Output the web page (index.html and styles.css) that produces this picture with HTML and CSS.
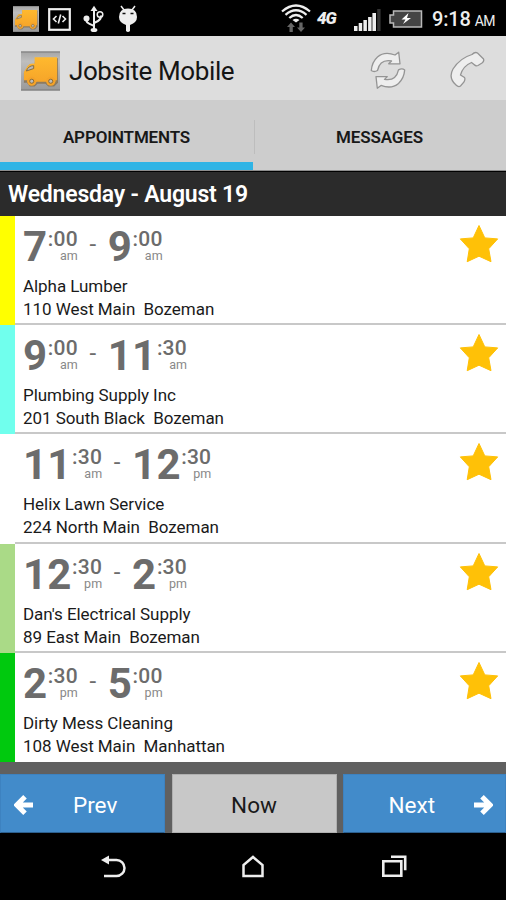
FILE: index.html
```
<!DOCTYPE html>
<html lang="en">
<head>
<meta charset="utf-8">
<title>Jobsite Mobile</title>
<link rel="stylesheet" href="styles.css">
</head>
<body>
<svg class="defs" width="0" height="0">
  <defs>
    <linearGradient id="plate" x1="0" y1="0" x2="0" y2="1"><stop offset="0" stop-color="#a5a5a5"/><stop offset=".25" stop-color="#bebebe"/><stop offset="1" stop-color="#999"/></linearGradient>
    <linearGradient id="van" x1="0" y1="0" x2="0" y2="1"><stop offset="0" stop-color="#ffb92e"/><stop offset="1" stop-color="#f5a329"/></linearGradient>
    <symbol id="truck" viewBox="0 0 40 40">
      <rect width="40" height="40" fill="url(#plate)"/>
      <path d="M0 .5h40M0 39.5h40" stroke="#777"/>
      <path d="M14.500 7h23.500v25l-4 4h-6l-3-3h-8l-3 3H9l-3-4H3V22l4-7q2-3 7-2z" fill="#816a43" opacity=".7"/>
      <path d="M14 6h23v23.500h-1.500a5 5 0 0 1-9.500 1.500H16a5 5 0 0 1-9.500-1.500H3V21l4-6.500q2-2.500 7-2z" fill="url(#van)"/>
      <circle cx="11" cy="30.500" r="4.700" fill="#f5a329"/><circle cx="30.500" cy="30.500" r="4.700" fill="#f5a329"/>
      <path d="M5.500 20q2-5.500 7.500-5.500v3z" fill="#b7b7b7" stroke="#846b40"/>
      <circle cx="11" cy="30.500" r="2.100" fill="#bbb" stroke="#8a6930"/>
      <circle cx="30.500" cy="30.500" r="2.100" fill="#bbb" stroke="#8a6930"/>
    </symbol>
    <symbol id="star" viewBox="0 0 40 40"><path d="M20 1.500 25.800 13.900 38.700 14.900 29.700 24.800 32 37.700 20 32.200 8.200 37.700 10.300 24.800 1.300 14.900 14.200 13.900Z" fill="#ffc107" stroke="#ffc107" stroke-width="1" stroke-linejoin="round"/></symbol>
    <symbol id="arrow" viewBox="0 0 20 20"><path d="M11 1.800 2.800 10l8.200 8.200M3.500 10H19" fill="none" stroke="#fff" stroke-width="5"/></symbol>
  </defs>
</svg>
<div class="screen">
  <header class="status">
    <div class="status-left">
      <svg width="26" height="26"><use href="#truck"/></svg>
      <svg width="23" height="23" viewBox="0 0 23 23" fill="none" stroke="#eee"><rect x="1.200" y="1.200" width="20.600" height="20.600" stroke-width="2.200"/><path d="M8.500 8 5.500 11l3 3M14.500 8l3 3-3 3M12.700 6.500l-2.400 9" stroke-width="1.600"/></svg>
      <svg class="usb" width="22" height="28" viewBox="0 0 22 28" fill="none" stroke="#eee" stroke-width="2"><path d="M11 5v19M3.500 14v1.500q0 2 3 3.300l4.500 2M11 18l4-2q3-1.500 3-5.500"/><path d="M7.500 6 11 .8 14.500 6z" fill="#eee" stroke="none"/><circle cx="3.500" cy="13.500" r="3" fill="#eee" stroke="none"/><circle cx="17" cy="9.500" r="2.800" stroke-width="1.500"/><ellipse cx="11" cy="25" rx="3.400" ry="2" fill="#eee" stroke="none"/></svg>
      <svg class="bot" width="20" height="28" viewBox="0 0 20 28"><path d="M3 1l3 4M17 1l-3 4" stroke="#eee" stroke-width="1.500"/><path d="M1 12Q1 3.500 10 3.500T19 12Q19 17.500 12 20v6q-2 2-4 0v-6Q1 17.500 1 12z" fill="#eee"/><path d="M4.500 8.500h3M12.500 8.500h3" stroke="#111" stroke-width="1.500"/></svg>
    </div>
    <div class="status-right">
      <svg class="wifi" width="30" height="29" viewBox="0 0 30 29" fill="none" stroke="#eee" stroke-width="2.300"><path d="M1 7.500Q15-4.500 29 7.500M4.500 10.800q10.500-9 21 0M8.300 14q6.700-6 13.400 0"/><path d="M11.500 16q3.500-2.500 7 0L15 18.500z" fill="#eee" stroke="none"/><path d="M10 18.500 14 23h-2.200v5H8.500v-5H6zM20 28l-4-4.500h2.300v-5h3.300v5H24z" fill="#666" stroke="none"/></svg>
      <span class="fourg">4G</span>
      <svg class="signal" width="27" height="22" viewBox="0 0 27 22"><path d="M0 17h3.500v5H0zM4.700 14h3.500v8H4.700zM9.400 11h3.500v11H9.400zM14.100 8h3.500v14h-3.500zM18.400 4H22v18h-3.600z" fill="#eee"/><path d="M23.200 0h3.400v22h-3.400z" fill="#333"/></svg>
      <svg class="battery" width="35" height="18" viewBox="0 0 35 18"><path d="M5.500 1h28v16h-28v-4H2V5h3.500z" fill="#444" stroke="#b8b8b8" stroke-width="1.500"/><path d="M20.500 3 13.500 9.500h4L15 14l8-6h-4z" fill="#fff"/></svg>
      <span class="clock">9:18</span><span class="ampm">AM</span>
    </div>
  </header>
  <div class="appbar">
    <svg class="logo" width="39" height="40" preserveAspectRatio="none"><use href="#truck"/></svg>
    <h1>Jobsite Mobile</h1>
    <svg class="sync" width="36" height="38" viewBox="0 0 36 38" fill="#eee" stroke="#949494" stroke-width="1.300" stroke-linejoin="round"><path id="half" d="M1.300 19.500Q2 11 7.500 6Q14.500 0 25 4L28.700 1.200 30 12.800H18.700L21.500 10Q10 8 7.500 19.500Q4 21.500 1.300 19.500z"/><use href="#half" transform="rotate(180 18 19.200)"/></svg>
    <svg class="phone" width="36" height="37" viewBox="0 0 36 37"><path d="M23 3.500Q26 .5 28.500 2L34.500 8Q35.500 10 33 12L29 14.500Q27 15.500 25 13.500L22.500 11.500Q14 15 11.500 24L15.500 26.500Q16.500 28 15 31L11.500 35Q9.500 36.500 7 34Q-1 27 4 18Q11 7 23 3.500z" fill="#eee" stroke="#949494" stroke-width="1.300"/></svg>
  </div>
  <nav class="tabs">
    <div class="tab active"><span class="t1">APPOINTMENTS</span></div>
    <div class="tab"><span class="t2">MESSAGES</span></div>
  </nav>
  <h2 class="date">Wednesday - August 19</h2>
  <main class="list">
    <article class="row yellow"><div class="info"><div class="times"><b>7</b><span class="sub"><span class="min">:00</span><span class="mer">am</span></span><i>-</i><b>9</b><span class="sub"><span class="min">:00</span><span class="mer">am</span></span></div><p>Alpha Lumber</p><p>110 West Main&nbsp; Bozeman</p></div><svg class="star" width="40" height="40"><use href="#star"/></svg></article>
    <article class="row cyan"><div class="info"><div class="times"><b>9</b><span class="sub"><span class="min">:00</span><span class="mer">am</span></span><i>-</i><b>11</b><span class="sub"><span class="min">:30</span><span class="mer">am</span></span></div><p>Plumbing Supply Inc</p><p>201 South Black&nbsp; Bozeman</p></div><svg class="star" width="40" height="40"><use href="#star"/></svg></article>
    <article class="row white"><div class="info"><div class="times"><b>11</b><span class="sub"><span class="min">:30</span><span class="mer">am</span></span><i>-</i><b>12</b><span class="sub"><span class="min">:30</span><span class="mer">pm</span></span></div><p>Helix Lawn Service</p><p>224 North Main&nbsp; Bozeman</p></div><svg class="star" width="40" height="40"><use href="#star"/></svg></article>
    <article class="row light"><div class="info"><div class="times"><b>12</b><span class="sub"><span class="min">:30</span><span class="mer">pm</span></span><i>-</i><b>2</b><span class="sub"><span class="min">:30</span><span class="mer">pm</span></span></div><p>Dan's Electrical Supply</p><p>89 East Main&nbsp; Bozeman</p></div><svg class="star" width="40" height="40"><use href="#star"/></svg></article>
    <article class="row green"><div class="info"><div class="times"><b>2</b><span class="sub"><span class="min">:30</span><span class="mer">pm</span></span><i>-</i><b>5</b><span class="sub"><span class="min">:00</span><span class="mer">pm</span></span></div><p>Dirty Mess Cleaning</p><p>108 West Main&nbsp; Manhattan</p></div><svg class="star" width="40" height="40"><use href="#star"/></svg></article>
  </main>
  <div class="pager">
    <div class="btn blue prev"><svg width="20" height="20"><use href="#arrow"/></svg><span>Prev</span></div>
    <div class="btn grey"><span>Now</span></div>
    <div class="btn blue next"><span>Next</span><svg class="flip" width="20" height="20"><use href="#arrow"/></svg></div>
  </div>
  <footer class="sysnav">
    <svg width="26" height="24" viewBox="0 0 26 24"><path d="M7 5h9.500a8 8 0 0 1 0 16H4" fill="none" stroke="#eee" stroke-width="2.500"/><path d="M1 5l8-4.500v9z" fill="#eee"/></svg>
    <svg width="26" height="24" viewBox="0 0 26 24"><path d="M3.500 21V10L13 2l9.500 8v11z" fill="none" stroke="#eee" stroke-width="2.500"/></svg>
    <svg width="26" height="24" viewBox="0 0 26 24" fill="none" stroke="#eee" stroke-width="2.600"><path d="M2.300 6.300h18v14.500h-18zM10 1.700h14.200v13.500"/></svg>
  </footer>
</div>
</body>
</html>
```
FILE: styles.css
```
* { box-sizing: border-box; margin: 0; padding: 0; }
body { width: 506px; height: 900px; overflow: hidden; background: #000; font-family: Roboto, "Liberation Sans", sans-serif; }
svg { display: block; flex: none; }
.defs { position: absolute; }
.screen { display: flex; flex-direction: column; width: 506px; height: 900px; }

.status { height: 36px; flex: none; display: flex; justify-content: space-between; background: #000; color: #eee; }
.status-left, .status-right { display: flex; align-items: center; }
.status-left { padding: 2px 0 0 13px; }
.status-left svg:nth-child(2) { margin-left: 9px; }
.usb { margin-left: 12px; }
.bot { margin-left: 13px; }
.status-right { padding-right: 11px; }
.wifi { margin-top: 1px; }
.fourg { width: 24px; margin-left: 6px; font-size: 17px; font-weight: 900; font-style: italic; letter-spacing: -1px; }
.signal { margin: 3px 0 0 13px; }
.battery { margin: 1px 0 0 7px; }
.clock { margin: 2px 0 0 9px; font-size: 20px; font-weight: 500; letter-spacing: -.2px; }
.ampm { margin: 6px 0 0 4px; font-size: 14px; letter-spacing: -.5px; }

.appbar { height: 64px; flex: none; display: flex; align-items: center; padding: 3px 21px 0; background: #ddd; }
.logo { margin-top: 2px; }
.appbar h1 { margin: 2px 0 0 9px; font-size: 26px; font-weight: 400; line-height: 32px; letter-spacing: -.4px; color: #151515; white-space: nowrap; }
.sync { margin: 1px 0 0 auto; }
.phone { margin: 0 0 0 43px; }

.tabs { height: 71px; flex: none; display: flex; background: #cdcdcd; border-bottom: 1px solid #8c8c8c; }
.tab { flex: 1; display: flex; align-items: center; justify-content: center; padding-top: 12px; font-size: 17px; font-weight: 600; letter-spacing: -.15px; color: #181818; border-bottom: 8px solid transparent; }
.tab.active { border-color: #30b4e5; }
.tab + .tab { background: linear-gradient(#bdbdbd, #bdbdbd) 1px 20px / 1px 34px no-repeat; }

.date { height: 45px; flex: none; padding-left: 8px; font-size: 23px; font-weight: 600; line-height: 45px; letter-spacing: -.2px; color: #fff; background: #2b2b2b; border-top: 1px solid #000; white-space: nowrap; }

.list { height: 546px; flex: none; display: grid; grid-template-rows: repeat(5, 1fr); background: #fff; }
.row { display: flex; justify-content: space-between; border-left: 15px solid; box-shadow: inset 0 -2px #c8c8c8; }
.row:last-child { box-shadow: none; }
.yellow { border-color: #ff0; }
.cyan { border-color: #70ffed; }
.white { border-color: #fff; }
.light { border-color: #aada87; }
.green { border-color: #00c90e; }
.info { padding: 9px 0 0 8px; }
.times { display: flex; height: 50px; color: #6c6c6c; }
.times b { font-size: 42px; line-height: 44px; font-weight: 700; letter-spacing: .2px; }
.sub { width: 30.500px; display: flex; flex-direction: column; align-items: flex-end; }
.min { font-size: 21px; line-height: 24px; margin-top: 2px; font-weight: 500; letter-spacing: .2px; }
.mer { font-size: 12.500px; line-height: 12px; margin-top: -1px; color: #888; }
.times i { width: 30px; text-align: center; font-style: normal; font-size: 24px; line-height: 38px; }
.info p { font-size: 17px; line-height: 23px; letter-spacing: -.05px; color: #1a1a1a; white-space: nowrap; }
.star { margin: 8px 7.500px 0 0; }

.pager { height: 71px; flex: none; display: grid; grid-template-columns: 165px 165px 163px; column-gap: 6.500px; padding-top: 12px; background: #606060; }
.btn { display: flex; align-items: center; justify-content: center; padding-top: 2px; font-size: 22.500px; border: 1px solid #3d82c0; border-bottom-color: #2c5f8e; }
.blue { background: #428bca; color: #fff; }
.grey { background: #c8c8c8; color: #1a1a1a; border-color: #b0b0b0; }
.prev { justify-content: flex-start; padding-left: 13px; }
.prev span { margin-left: 39px; }
.next { justify-content: flex-end; padding-right: 12px; }
.next span { margin-right: 38px; }
.flip { transform: scaleX(-1); }

.sysnav { flex: 1; display: flex; justify-content: center; align-items: center; gap: 114.500px; background: #000; }
```
